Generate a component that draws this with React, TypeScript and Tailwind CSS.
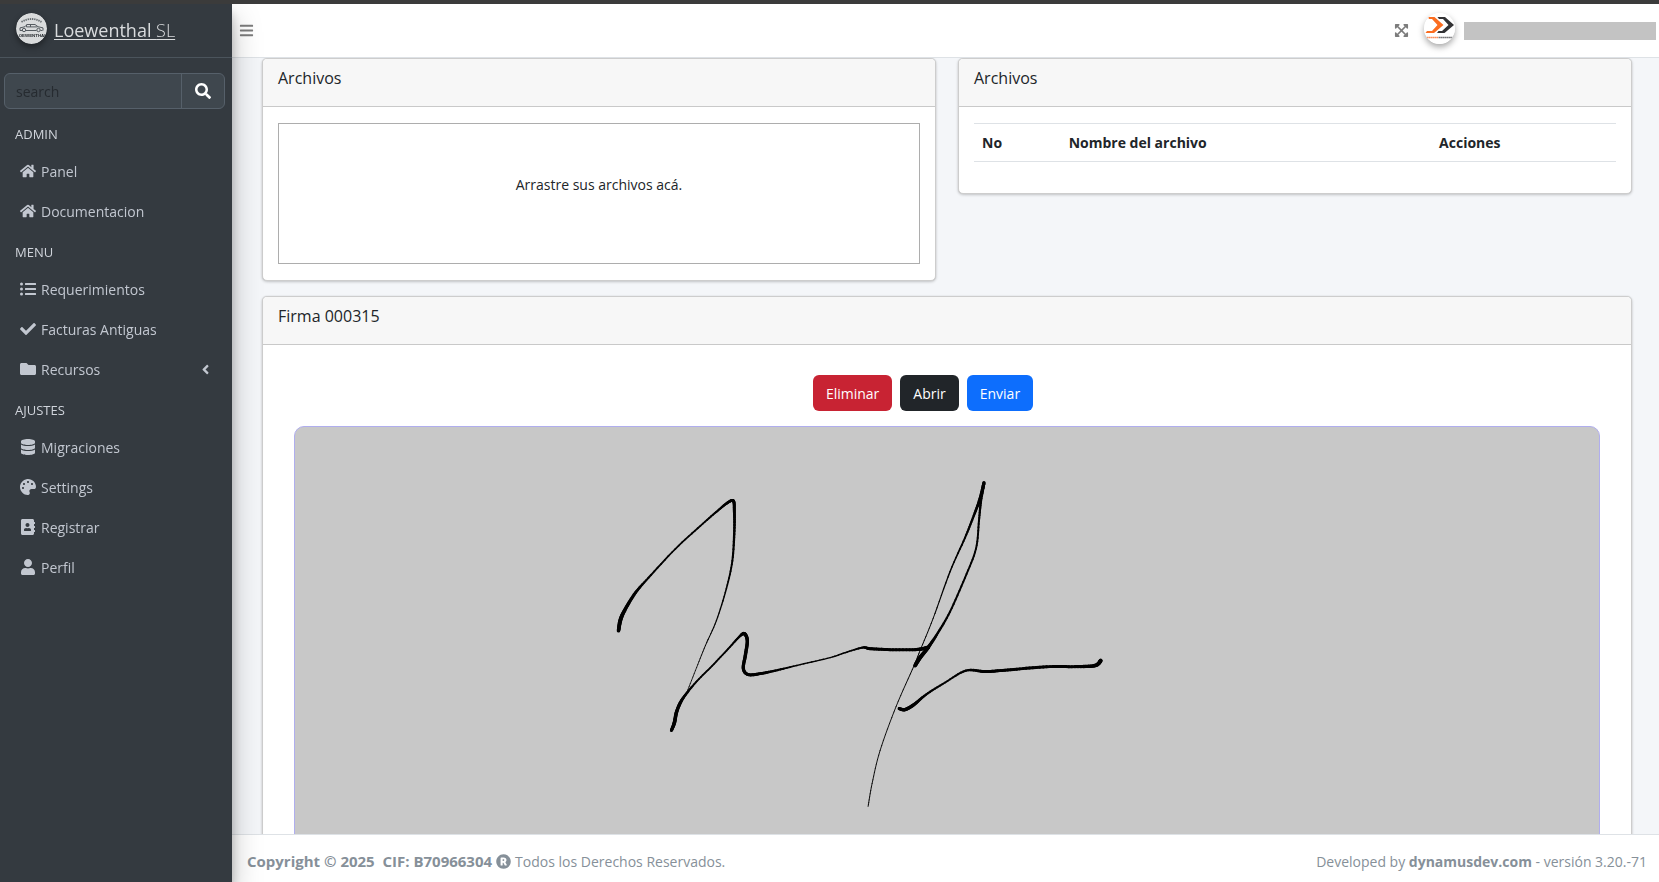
import { useMemo } from "react";
import type { ReactNode } from "react";
import type { IconType } from "react-icons";
import {
  FaAddressBook,
  FaAngleLeft,
  FaBars,
  FaCheck,
  FaDatabase,
  FaExpandArrowsAlt,
  FaFolder,
  FaHome,
  FaListUl,
  FaPalette,
  FaRegistered,
  FaSearch,
  FaUser,
} from "react-icons/fa";

type NavItem = { label: string; icon: IconType; expandable?: boolean };
type NavGroup = { title: string; items: NavItem[] };

const groups: NavGroup[] = [
  {
    title: "ADMIN",
    items: [
      { label: "Panel", icon: FaHome },
      { label: "Documentacion", icon: FaHome },
    ],
  },
  {
    title: "MENU",
    items: [
      { label: "Requerimientos", icon: FaListUl },
      { label: "Facturas Antiguas", icon: FaCheck },
      { label: "Recursos", icon: FaFolder, expandable: true },
    ],
  },
  {
    title: "AJUSTES",
    items: [
      { label: "Migraciones", icon: FaDatabase },
      { label: "Settings", icon: FaPalette },
      { label: "Registrar", icon: FaAddressBook },
      { label: "Perfil", icon: FaUser },
    ],
  },
];

function CompanyLogo() {
  return (
    <svg viewBox="0 0 31 31" className="size-[31px] rounded-full shadow-[0_3px_6px_rgba(0,0,0,0.4)]" aria-hidden="true">
      <circle cx="15.5" cy="15.5" r="15.5" fill="#d9dbdc" />
      <path d="M5.5 9Q15.5 3 25.5 9" fill="none" stroke="#666c70" strokeWidth="1.8" strokeDasharray="1.4 0.8" />
      <path
        d="M4 17.5v-2.6l5-1.2 2-2.2h8l3 2.2 5 1.2v2.6M10.5 11.5v2.4h11M14.5 11.5v2.4M4 17.5h2M10 17.5h10.5M24.5 17.5h2"
        fill="none"
        stroke="#555b60"
        strokeWidth="1"
      />
      <circle cx="8" cy="17" r="1.7" fill="none" stroke="#555b60" strokeWidth="1" />
      <circle cx="22.5" cy="17" r="1.7" fill="none" stroke="#555b60" strokeWidth="1" />
      <text x="15.5" y="23.5" textAnchor="middle" fontFamily="Liberation Sans" fontWeight="700" fontSize="4.4" fill="#24292d">
        LOEWENTHAL
      </text>
    </svg>
  );
}

function UserLogo() {
  return (
    <svg viewBox="0 0 31 31" className="size-[31px] rounded-full shadow-[0_3px_6px_rgba(0,0,0,0.35)]" aria-hidden="true">
      <circle cx="15.5" cy="15.5" r="15.5" fill="#fff" />
      <path d="M4 4h6.5L19.500 12 10 20H1.500l1.500-2h5l5.500-6L8 6H5z" fill="#fb6d20" />
      <path d="M13.500 4H21l9 8-9.500 8H13l1.500-2H18l6.500-6-5.500-6h-4z" fill="#333335" />
      <path d="M2.500 24.500H14" stroke="#fb8f5c" strokeWidth="1.600" strokeDasharray="1.800 0.300" />
      <path d="M14.500 24.500h14" stroke="#77777a" strokeWidth="1.600" strokeDasharray="1.800 0.300" />
    </svg>
  );
}

function Sidebar() {
  return (
    <aside className="relative z-10 flex w-[232px] shrink-0 flex-col bg-[#343a40] text-[#c2c7d0] shadow-[0_14px_28px_rgba(0,0,0,0.25),0_10px_10px_rgba(0,0,0,0.22)]">
      <a href="#inicio" className="flex h-[54px] items-center gap-[7px] border-b border-[#4b545c] px-4 pb-1 text-[18px] text-[#dadcde]">
        <CompanyLogo />
        <span className="pt-1 underline underline-offset-2">
          Loewenthal <span className="font-light">SL</span>
        </span>
      </a>
      <form role="search" className="mt-[15px] mr-[7px] ml-1 flex h-9 rounded-md border border-[#56606a] bg-[#3f474e]" onSubmit={(e) => e.preventDefault()}>
        <input
          type="search"
          placeholder="search"
          aria-label="search"
          className="min-w-0 flex-1 bg-transparent px-[11px] text-[14px] text-white outline-none placeholder:text-[#262b30]"
        />
        <button type="submit" aria-label="Buscar" className="flex w-[43px] items-center justify-center border-l border-[#56606a] text-white">
          <FaSearch size={16} />
        </button>
      </form>
      <nav className="mt-[10px]">
        {groups.map((group) => (
          <section key={group.title} className="mb-1.5">
            <h2 className="flex h-8 items-center px-[15px] text-[13px] text-[#d0d4db]">{group.title}</h2>
            <ul>
              {group.items.map(({ label, icon: Icon, expandable }) => (
                <li key={label}>
                  <a href={"#" + label.toLowerCase().replace(" ", "-")} className="flex h-10 items-center pr-[19px] pl-5 text-[14px]">
                    <Icon size={16} className="mr-[5px]" />
                    <span className="flex-1">{label}</span>
                    {expandable && <FaAngleLeft size={15} />}
                  </a>
                </li>
              ))}
            </ul>
          </section>
        ))}
      </nav>
    </aside>
  );
}

function Card({ title, children, className }: { title: string; children: ReactNode; className?: string }) {
  return (
    <section className={"rounded-[5px] border border-[#cdcdcd] bg-white shadow-[0_1px_3px_rgba(0,0,0,0.2),0_0_1px_rgba(0,0,0,0.125)] " + (className ?? "")}>
      <h3 className="h-12 rounded-t-[4px] border-b border-[#c9c9c9] bg-[#f7f7f7] px-[15px] pt-[7px] text-[16px] leading-6">{title}</h3>
      {children}
    </section>
  );
}

type Sample = [x: number, y: number, width: number];

// Pen strokes as sampled positions with the pen width at each of them.
const strokes: Sample[][] = [
  [[618, 630, 3.5], [620, 619, 4], [625, 608, 3.5], [635, 592, 3], [648, 577, 2], [675, 548, 1.7], [700, 525, 1.8], [716, 511, 2], [727, 502, 2.6], [733, 500, 3], [734, 510, 3], [734, 530, 2.5], [732, 560, 2], [726, 588, 1.6], [716, 620, 1.2], [705, 645, 1], [695, 670, 0.8], [686, 693, 0.8]],
  [[671, 730, 3], [674, 722, 3.6], [676, 712, 3.5], [680, 702, 3.2], [686, 693, 2.5], [697, 680, 1.8], [712, 665, 1.7], [728, 648, 1.8], [739, 636, 2.2], [744, 633, 3.4], [747, 640, 3.4], [745, 655, 3.4], [743, 668, 3.2], [748, 674, 3], [760, 673, 3], [775, 670, 2.4], [800, 664, 1.5], [830, 657, 1.3], [845, 652, 1.5], [862, 647, 2], [870, 648, 3], [890, 649, 3], [915, 649, 3], [928, 647, 4]],
  [[915, 665, 3.6], [920, 657, 4], [928, 647, 3.6], [938, 632, 2.4], [950, 611, 2], [965, 577, 1.9], [976, 548, 1.9], [979, 520, 2], [981, 500, 2.4], [984, 482, 3.2]],
  [[984, 482, 3.2], [980, 498, 3.2], [973, 517, 2.4], [965, 537, 2], [950, 571, 1.5], [933, 618, 1], [920, 650, 1], [914, 665, 1], [896, 706, 0.9], [880, 750, 0.9], [872, 783, 0.9], [868, 806, 0.9]],
  [[899, 708, 3], [905, 709, 3.4], [914, 704, 3.4], [926, 694, 2.3], [945, 682, 1.8], [966, 670, 2.2], [985, 671, 3], [1000, 670, 3], [1023, 668, 3], [1050, 666, 3], [1075, 666, 3], [1095, 665, 3.6], [1101, 660, 4]],
];

const STEPS = 8;

function spline(a: number, b: number, c: number, d: number, t: number) {
  return 0.5 * (2 * b + (c - a) * t + (2 * a - 5 * b + 4 * c - d) * t * t + (3 * b - a - 3 * c + d) * t * t * t);
}

function smooth(points: Sample[]): Sample[] {
  const out: Sample[] = [points[0]];
  for (let i = 0; i < points.length - 1; i++) {
    const p0 = points[Math.max(i - 1, 0)];
    const p1 = points[i];
    const p2 = points[i + 1];
    const p3 = points[Math.min(i + 2, points.length - 1)];
    for (let s = 1; s <= STEPS; s++) {
      const t = s / STEPS;
      out.push([spline(p0[0], p1[0], p2[0], p3[0], t), spline(p0[1], p1[1], p2[1], p3[1], t), p1[2] + (p2[2] - p1[2]) * t]);
    }
  }
  return out;
}

function Signature() {
  const lines = useMemo(() => strokes.map(smooth), []);
  return (
    <svg viewBox="294 426 1306 480" className="block w-full" role="img" aria-label="Firma">
      <g stroke="#000" strokeLinecap="round">
        {lines.map((points, n) =>
          points.slice(1).map(([x, y, w], i) => (
            <line key={n + "-" + i} x1={points[i][0]} y1={points[i][1]} x2={x} y2={y} strokeWidth={w} />
          )),
        )}
      </g>
    </svg>
  );
}

export default function App() {
  return (
    <div className="flex h-screen flex-col overflow-hidden border-t-4 border-[#3b3b3b] font-['Open_Sans','Noto_Sans',sans-serif] text-[#212529]">
      <div className="flex min-h-0 flex-1">
        <Sidebar />
        <div className="flex min-w-0 flex-1 flex-col">
          <header className="flex h-[54px] shrink-0 items-center border-b border-[#dee2e6] bg-white pr-[3px] pl-[7px] text-[#7c7c7c]">
            <button type="button" aria-label="Menú" className="mr-auto">
              <FaBars size={15} />
            </button>
            <button type="button" aria-label="Pantalla completa" className="mr-[15px]">
              <FaExpandArrowsAlt size={15} />
            </button>
            <a href="#perfil" aria-label="Usuario" className="flex items-center gap-[9px]">
              <span className="pb-1">
                <UserLogo />
              </span>
              <span className="mt-px h-[18px] w-48 bg-[#c3c3c3]" />
            </a>
          </header>

          <main className="min-h-0 flex-1 overflow-y-auto bg-[#f4f6f9] pr-[27px] pl-[30px] [scrollbar-width:none]">
            <div className="grid grid-cols-2 items-start gap-[22px]">
              <Card title="Archivos">
                <div className="px-[15px] py-4">
                  <div className="flex h-[141px] justify-center border border-[#adadad] pt-[49px] text-[14px] leading-6">Arrastre sus archivos acá.</div>
                </div>
              </Card>
              <Card title="Archivos">
                <div className="px-[15px] pt-4 pb-[31px]">
                  <table className="w-full table-fixed border-collapse text-left text-[14px] leading-[21px]">
                    <thead>
                      <tr className="border-y border-[#dee2e6]">
                        <th className="w-[13.5%] p-2 font-bold">No</th>
                        <th className="w-[57.7%] p-2 font-bold">Nombre del archivo</th>
                        <th className="p-2 font-bold">Acciones</th>
                      </tr>
                    </thead>
                    <tbody />
                  </table>
                </div>
              </Card>
            </div>

            <Card title="Firma 000315" className="mt-[15px] mb-4">
              <div className="px-[31px] pt-[30px] pb-8">
                <div className="flex justify-center gap-2 pr-12 text-[14px] text-white">
                  <button type="button" className="h-9 rounded-md bg-[#c82333] px-[13px]">
                    Eliminar
                  </button>
                  <button type="button" className="h-9 rounded-md bg-[#212529] px-[13px]">
                    Abrir
                  </button>
                  <button type="button" className="h-9 rounded-md bg-[#0d6efd] px-[13px]">
                    Enviar
                  </button>
                </div>
                <div className="mt-[15px] overflow-hidden rounded-[10px] border border-[#b0aeee] bg-[#c8c8c8]">
                  <Signature />
                </div>
              </div>
            </Card>
          </main>

          <footer className="flex h-12 shrink-0 items-center justify-between border-t border-[#dee2e6] bg-white pt-[5px] pr-3 pl-[15px] text-[14px] text-[#869099]">
            <p className="flex items-center gap-1">
              <strong className="text-[15px] whitespace-pre">Copyright © 2025  CIF: B70966304</strong>
              <FaRegistered size={15} />
              <span>Todos los Derechos Reservados.</span>
            </p>
            <p>
              Developed by{" "}
              <a href="#dynamusdev" className="font-bold">
                dynamusdev.com
              </a>{" "}
              - versión 3.20.-71
            </p>
          </footer>
        </div>
      </div>
    </div>
  );
}
